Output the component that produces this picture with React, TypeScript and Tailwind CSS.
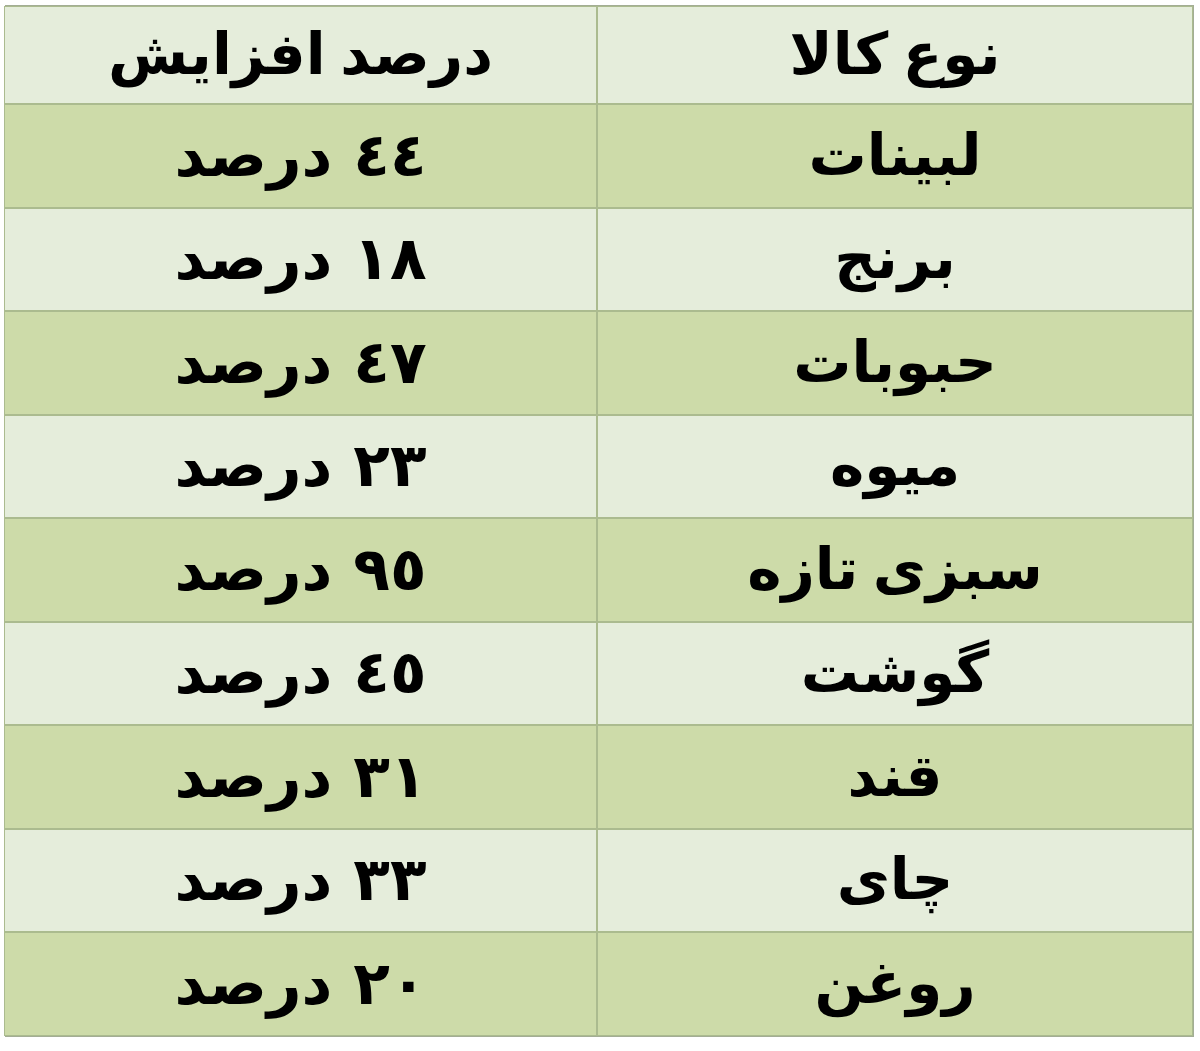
const rows: [string, string][] = [
  ['لبینات', '٤٤ درصد'],
  ['برنج', '١٨ درصد'],
  ['حبوبات', '٤٧ درصد'],
  ['میوه', '٢٣ درصد'],
  ['سبزی تازه', '٩٥ درصد'],
  ['گوشت', '٤٥ درصد'],
  ['قند', '٣١ درصد'],
  ['چای', '٣٣ درصد'],
  ['روغن', '٢٠ درصد'],
]

function Cell({ children, dark, wide }: { children: React.ReactNode; dark?: boolean; wide?: boolean }) {
  return (
    <div
      className={`flex items-center justify-center border border-[#abbb8f] text-[58px] font-bold leading-none text-black ${
        dark ? 'bg-[#cddba9]' : 'bg-[#e5eddb]'
      } ${wide ? 'text-[60px] [word-spacing:6px]' : ''}`}
    >
      {children}
    </div>
  )
}

export default function App() {
  return (
    <div className="min-h-[1051px] w-[1200px] bg-white pt-[5px] pl-[5px]">
      <div
        dir="rtl"
        className="grid w-[1189px] grid-cols-[596px_593px] grid-rows-[98px_repeat(9,103.5px)] border border-[#a3ad95] font-['Liberation_Serif','DejaVu_Sans',serif]"
      >
        <Cell>نوع کالا</Cell>
        <Cell>درصد افزایش</Cell>
        {rows.map(([name, pct], i) => (
          <>
            <Cell key={name} dark={i % 2 === 0}>
              {name}
            </Cell>
            <Cell key={pct + i} dark={i % 2 === 0} wide>
              {pct}
            </Cell>
          </>
        ))}
      </div>
    </div>
  )
}
